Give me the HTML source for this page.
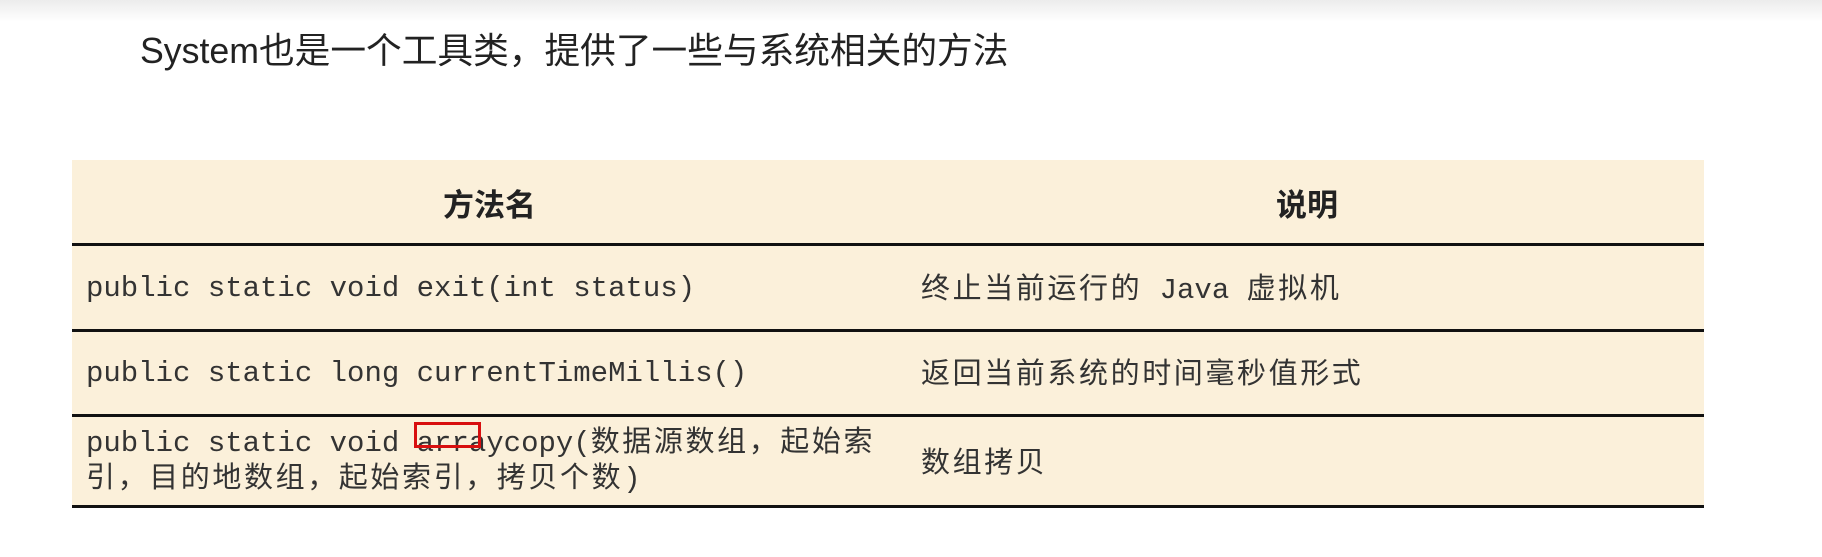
<!DOCTYPE html>
<html><head><meta charset="utf-8"><style>
body{margin:0;width:1822px;height:557px;background:#fff;position:relative;overflow:hidden;font-family:"Liberation Sans","Noto Sans CJK SC",sans-serif}
.top{position:absolute;left:0;top:0;width:1822px;height:22px;background:linear-gradient(#ececec,#fff)}
.title{position:absolute;left:140px;top:30px;font-size:35.7px;line-height:42px;color:#222;white-space:nowrap}
.tbl{position:absolute;left:72px;top:160px;width:1632px;height:347px;background:#fbf0da}
.ln{position:absolute;left:72px;width:1632px;height:3px;background:#111}
.t{position:absolute;font-family:"Liberation Mono","Noto Sans CJK SC",monospace;font-size:29px;line-height:34px;color:#333;white-space:nowrap}
.h{position:absolute;font-weight:bold;font-size:31px;line-height:36px;color:#222}
.c{letter-spacing:2.6px}
</style></head><body>
<div class="top"></div>
<div class="title">System也是一个工具类，提供了一些与系统相关的方法</div>
<div class="tbl"></div>
<div class="h" style="left:443px;top:188px">方法名</div>
<div class="h" style="left:1276px;top:188px">说明</div>
<div class="ln" style="top:243px"></div>
<div class="ln" style="top:329px"></div>
<div class="ln" style="top:414px"></div>
<div class="ln" style="top:505px"></div>
<div class="t" style="left:86px;top:272px">public static void exit(int status)</div>
<div class="t" style="left:921px;top:274px"><span class="c">终止当前运行的</span> Java <span class="c">虚拟机</span></div>
<div class="t" style="left:86px;top:357px">public static long currentTimeMillis()</div>
<div class="t" style="left:921px;top:359px"><span class="c">返回当前系统的时间毫秒值形式</span></div>
<div class="t" style="left:86px;top:427px">public static void arraycopy(<span class="c">数据源数组，起始索</span></div>
<div class="t" style="left:86px;top:463px"><span class="c">引，目的地数组，起始索引，拷贝个数</span>)</div>
<div class="t" style="left:921px;top:448px"><span class="c">数组拷贝</span></div>
<div style="position:absolute;left:414px;top:422px;width:61px;height:20px;border:3px solid #d80f0f"></div>
</body></html>
